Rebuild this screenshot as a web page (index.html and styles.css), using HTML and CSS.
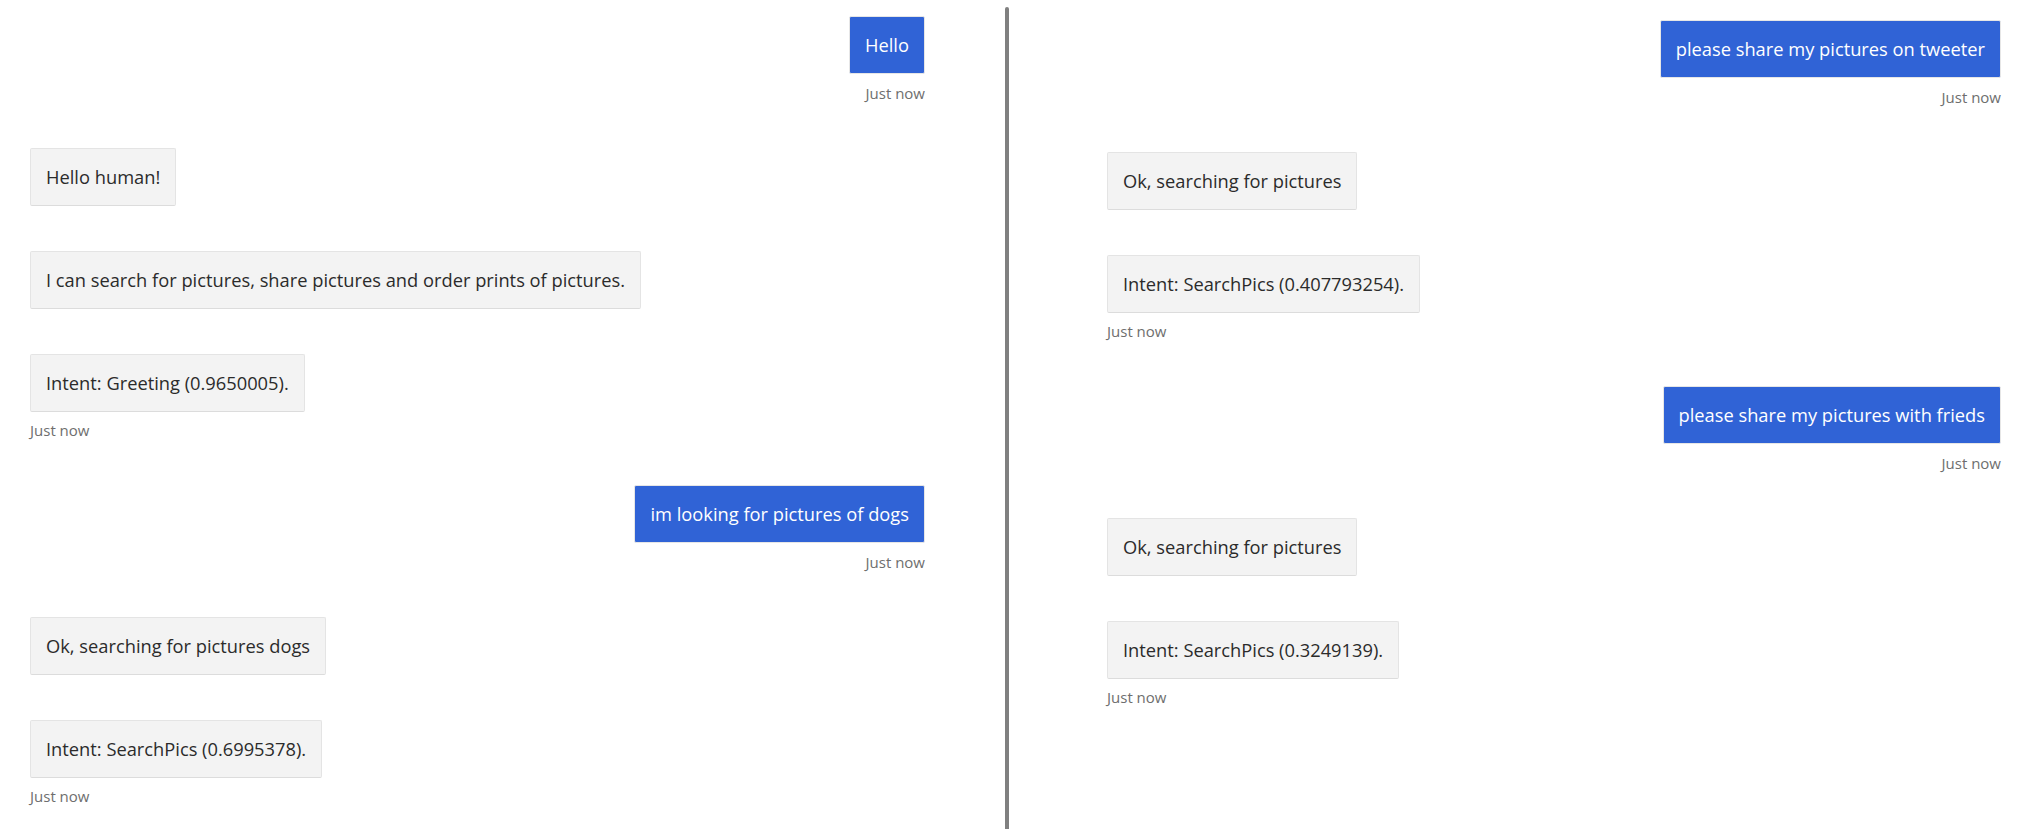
FILE: index.html
```html
<!DOCTYPE html>
<html lang="en">
<head>
<meta charset="utf-8">
<title>Chat</title>
<link rel="stylesheet" href="styles.css">
</head>
<body>
<div class="app">
  <section class="pane pane-left">
    <div class="msg user">
      <div class="bubble">Hello</div>
      <div class="ts">Just now</div>
    </div>
    <div class="msg bot">
      <div class="bubble">Hello human!</div>
    </div>
    <div class="msg bot">
      <div class="bubble">I can search for pictures, share pictures and order prints of pictures.</div>
    </div>
    <div class="msg bot">
      <div class="bubble">Intent: Greeting (0.9650005).</div>
      <div class="ts">Just now</div>
    </div>
    <div class="msg user">
      <div class="bubble">im looking for pictures of dogs</div>
      <div class="ts">Just now</div>
    </div>
    <div class="msg bot">
      <div class="bubble">Ok, searching for pictures dogs</div>
    </div>
    <div class="msg bot">
      <div class="bubble">Intent: SearchPics (0.6995378).</div>
      <div class="ts">Just now</div>
    </div>
  </section>
  <div class="divider"></div>
  <section class="pane pane-right">
    <div class="msg user">
      <div class="bubble">please share my pictures on tweeter</div>
      <div class="ts">Just now</div>
    </div>
    <div class="msg bot">
      <div class="bubble">Ok, searching for pictures</div>
    </div>
    <div class="msg bot">
      <div class="bubble">Intent: SearchPics (0.407793254).</div>
      <div class="ts">Just now</div>
    </div>
    <div class="msg user">
      <div class="bubble">please share my pictures with frieds</div>
      <div class="ts">Just now</div>
    </div>
    <div class="msg bot">
      <div class="bubble">Ok, searching for pictures</div>
    </div>
    <div class="msg bot">
      <div class="bubble">Intent: SearchPics (0.3249139).</div>
      <div class="ts">Just now</div>
    </div>
  </section>
</div>
</body>
</html>
```

FILE: styles.css
```css
html, body {
  margin: 0;
  padding: 0;
  background: #ffffff;
}

body {
  font-family: "Open Sans", "Noto Sans", "Liberation Sans", sans-serif;
  color: #333333;
}

.app {
  display: flex;
  height: 829px;
  overflow: hidden;
}

.pane {
  display: flex;
  flex-direction: column;
  box-sizing: border-box;
}

.pane-left {
  width: 1005px;
  flex: 0 0 1005px;
  padding: 16px 80px 0 30px;
}

.pane-right {
  flex: 1 1 auto;
  padding: 20px 23px 0 98px;
}

.divider {
  flex: 0 0 4px;
  width: 4px;
  margin-top: 7px;
  background: #808080;
  border-radius: 2px 2px 0 0;
}

.msg {
  display: flex;
  flex-direction: column;
  align-items: flex-start;
  margin-bottom: 45px;
}

.msg.user {
  align-items: flex-end;
}

.bubble {
  box-sizing: border-box;
  height: 58px;
  padding: 15px 15px;
  font-size: 18.3px;
  line-height: 26px;
  white-space: nowrap;
  background: #f3f3f3;
  border: 1px solid #e4e4e4;
  border-bottom-color: #dcdcdc;
  border-radius: 2px;
  color: #2b2b2b;
}

.msg.user .bubble {
  background: #3063d6;
  color: #ffffff;
  border-color: #e6e6e6;
}

.ts {
  margin-top: 8.5px;
  font-size: 15px;
  line-height: 20px;
  color: #6e6e6e;
}
```
